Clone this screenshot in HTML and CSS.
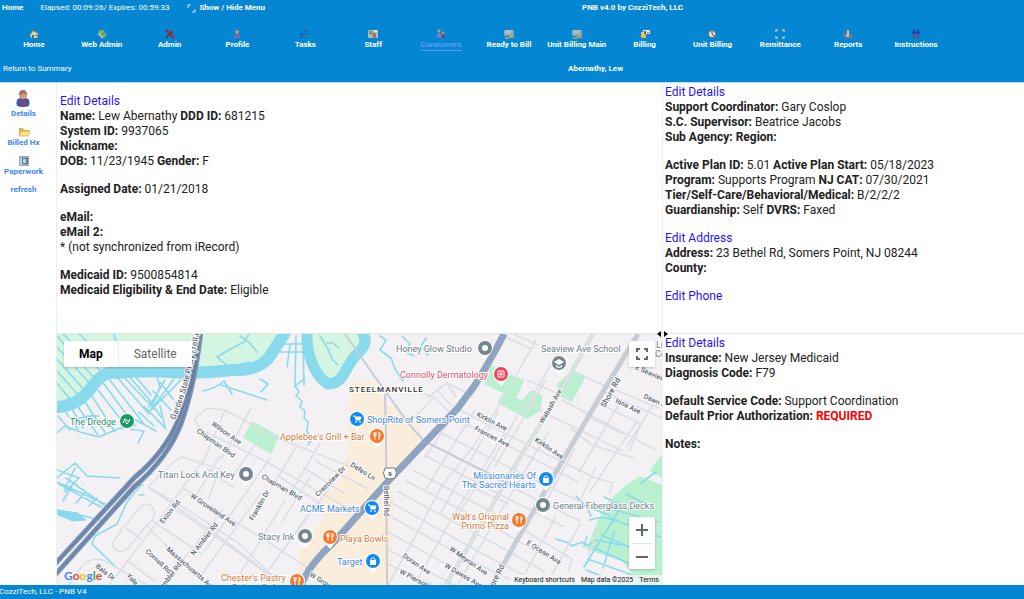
FILE: index.html
```html
<!DOCTYPE html>
<html lang="en">
<head>
<meta charset="utf-8">
<title>PNB v4.0 by CozziTech, LLC</title>
<link rel="stylesheet" href="styles.css">
</head>
<body>
<header class="header">
  <div class="topbar">
    <div class="topbar-left">
      <a class="home-link" href="#">Home</a>
      <span class="session">Elapsed: 00:09:26/ Expires: 00:59:33</span>
      <button class="menu-toggle" type="button"><svg class="toggle-icon" viewBox="0 0 9 9"><path d="M1 4V1h3M8 5v3H5" fill="none" stroke="#cfe8f8"/></svg>Show / Hide Menu</button>
    </div>
    <strong>PNB v4.0 by CozziTech, LLC</strong>
  </div>
  <nav class="nav" aria-label="Main">
    <a href="#"><svg viewBox="0 0 10 10"><path d="M1 5L4 1l5 3-1 5H2z" fill="#d8d2ae"/><path d="M1 5L4 1l5 3" fill="none" stroke="#5b7f5d" stroke-width="1.3"/><path d="M3 6h2v3H3z" fill="#765"/><path d="M6 6h2v1H6z" fill="#47a"/></svg><span>Home</span></a>
    <a href="#"><svg viewBox="0 0 10 10"><circle cx="5" cy="5" r="4.5" fill="#4c86b8"/><path d="M2 2l4-1 1 2-2 2-3 0zM5 6l4-2-1 4-3 1z" fill="#7dbd4b"/><path d="M1 5l3 1 1 3" stroke="#d5e8ef" fill="none"/></svg><span>Web Admin</span></a>
    <a href="#"><svg viewBox="0 0 10 10"><path d="M1 9L8 2" stroke="#444" stroke-width="2"/><path d="M1 1l8 8" stroke="#b71f35" stroke-width="2"/><path d="M7 1l2 2" stroke="#777"/></svg><span>Admin</span></a>
    <a href="#"><svg viewBox="0 0 10 10"><circle cx="5" cy="3" r="2" fill="#c69577"/><path d="M2 9q0-4 3-4t3 4z" fill="#6b74bd"/><path d="M5 5v3" stroke="#d23d48"/></svg><span>Profile</span></a>
    <a href="#"><svg viewBox="0 0 10 10"><path d="M3 2h6M2 5h6M2 8h6" stroke="#295e91"/><path d="M0 5h2M1 8h1" stroke="#2347c5" stroke-width="2"/></svg><span>Tasks</span></a>
    <a href="#"><svg viewBox="0 0 10 10"><path d="M0 1h10v8H0z" fill="#aebbb3"/><path d="M1 2h3v3H1z" fill="#6d8f65"/><path d="M4 5q2-3 4 0v4H5z" fill="#a66d70"/><path d="M6 1h3v2H6z" fill="#dce1cd"/></svg><span>Staff</span></a>
    <a class="current" href="#" aria-current="page"><svg viewBox="0 0 10 10"><circle cx="3" cy="2" r="1.5" fill="#c9987c"/><path d="M1 9q0-5 2-5t3 5z" fill="#7a80b8"/><circle cx="7" cy="4" r="1.5" fill="#dd765d"/><path d="M5 9q1-4 2-4t3 4z" fill="#5c4e98"/></svg><span>Consumers</span></a>
    <a href="#"><svg viewBox="0 0 10 10"><path d="M0 1h10v6H0z" fill="#8ba4b2"/><path d="M1 2h7M1 4h6" stroke="#ccd8dd"/><path d="M1 9h4M7 6v3M5 8h5" stroke="#c3a75b" stroke-width="1.5"/></svg><span>Ready to Bill</span></a>
    <a href="#"><svg viewBox="0 0 10 10"><path d="M0 1h10v6H0z" fill="#8ba4b2"/><path d="M1 2h7M1 4h6" stroke="#ccd8dd"/><path d="M1 9h4M7 6v3M5 8h5" stroke="#c3a75b" stroke-width="1.5"/></svg><span>Unit Billing Main</span></a>
    <a href="#"><svg viewBox="0 0 10 10"><path d="M1 3h5v6H1z" fill="#e9bd58"/><path d="M3 1h7v4H3z" fill="#eee5da"/><path d="M4 2h2v3H4z" fill="#496685"/><path d="M7 3h2v1H7z" fill="#ad5963"/></svg><span>Billing</span></a>
    <a href="#"><svg viewBox="0 0 10 10"><circle cx="5" cy="5" r="3.5" fill="#efe8df" stroke="#7e6868"/><path d="M5 2v3l2 2" stroke="#433e49" fill="none"/></svg><span>Unit Billing</span></a>
    <a href="#"><svg viewBox="0 0 10 10"><path d="M1 3V1h2M7 1h2v2M1 7v2h2M7 9h2V7" stroke="#b9c5c6" stroke-width="1.4" fill="none"/></svg><span>Remittance</span></a>
    <a href="#"><svg viewBox="0 0 10 10"><path d="M1 0v9h9" stroke="#63749d" fill="none"/><path d="M3 5v3" stroke="#ce778d" stroke-width="2"/><path d="M5 1v7" stroke="#efbd8c" stroke-width="2"/><path d="M8 5v3" stroke="#ca5f7a" stroke-width="2"/></svg><span>Reports</span></a>
    <a href="#"><svg viewBox="0 0 10 10"><path d="M1 6h8v4H1z" fill="#346b91"/><path d="M3 0v5M7 0v5M1 3l2 2 2-2 2 2 2-2" stroke="#3430b5" stroke-width="1.3" fill="none"/></svg><span>Instructions</span></a>
  </nav>
  <div class="subbar"><a href="#">Return to Summary</a><strong>Abernathy, Lew</strong></div>
</header>

<main class="main">
  <aside class="sidebar">
    <a href="#"><svg class="person-icon" viewBox="0 0 18 18"><path d="M3 16q-2-8 4-8h4q6 0 4 8-6 2-12 0z" fill="#4655a2"/><path d="M7 9l2 3 2-3v7H8z" fill="#9b3e63"/><circle cx="9" cy="5" r="4" fill="#d79b7e"/><path d="M5 5q0-5 4-5t4 5q-2-3-8 0" fill="#a3705c"/></svg>Details</a>
    <a href="#"><svg viewBox="0 0 12 10"><path d="M1 9V1h4l1 2h5v3z" fill="#dfb34f"/><path d="M1 9l2-5h9l-2 5z" fill="#ffe18c" stroke="#c89b3e" stroke-width=".6"/></svg>Billed Hx</a>
    <a href="#"><svg viewBox="0 0 12 10"><path d="M1 0h10v10H1z" fill="#9aa9b4"/><path d="M2 2h2v7H2z" fill="#c4cccc"/><path d="M4 2h6v6H4z" fill="#527db4"/><path d="M5 3h3v4H5z" fill="#c3dfb9"/></svg>Paperwork</a>
    <a href="#">refresh</a>
  </aside>

  <section class="pane pane-person">
    <div class="group"><p><a href="#">Edit Details</a></p><p><b>Name:</b> Lew Abernathy <b>DDD ID:</b> 681215</p><p><b>System ID:</b> 9937065</p><p><b>Nickname:</b></p><p><b>DOB:</b> 11/23/1945 <b>Gender:</b> F</p></div>
    <div class="group"><p><b>Assigned Date:</b> 01/21/2018</p></div>
    <div class="group"><p><b>eMail:</b></p><p><b>eMail 2:</b></p><p>* (not synchronized from iRecord)</p></div>
    <div class="group"><p><b>Medicaid ID:</b> 9500854814</p><p><b>Medicaid Eligibility &amp; End Date:</b> Eligible</p></div>
  </section>

  <section class="pane pane-plan">
    <div class="group"><p><a href="#">Edit Details</a></p><p><b>Support Coordinator:</b> Gary Coslop</p><p><b>S.C. Supervisor:</b> Beatrice Jacobs</p><p><b>Sub Agency:</b> <b>Region:</b></p></div>
    <div class="group"><p><b>Active Plan ID:</b> 5.01 <b>Active Plan Start:</b> 05/18/2023</p><p><b>Program:</b> Supports Program <b>NJ CAT:</b> 07/30/2021</p><p><b>Tier/Self-Care/Behavioral/Medical:</b> B/2/2/2</p><p><b>Guardianship:</b> Self <b>DVRS:</b> Faxed</p></div>
    <div class="group"><p><a href="#">Edit Address</a></p><p><b>Address:</b> 23 Bethel Rd, Somers Point, NJ 08244</p><p><b>County:</b></p></div>
    <div class="group"><p><a href="#">Edit Phone</a></p></div>
  </section>

  <section class="map" aria-label="Map">
    <svg class="map-canvas" viewBox="57 334 605 251" preserveAspectRatio="xMidYMid slice">
      <defs>
        <g id="pin"><path d="M0 12L-5 6a8 8 0 1 1 10 0z" fill="#fff"/><circle r="7"/></g>
        <g id="food" fill="none" stroke="#fff"><path d="M-3-4v3q0 1 1 1t1-1v-3M-2-4v8M2 4v-8q2 1 1 4H2"/></g>
        <g id="cart" fill="none" stroke="#fff"><path d="M-4-3h2l1 4h4l1-3h-5" fill="#fff"/><circle cx="-1" cy="3" r=".5"/><circle cx="3" cy="3" r=".5"/></g>
        <g id="bag"><path d="M-3-1h6v5h-6z" fill="#fff"/><path d="M-2-1v-1q2-3 4 0v1" fill="none" stroke="#fff"/></g>
        <path id="parkway-label" d="M175 420Q185 396 190 375Q196 352 202 320"/>
      </defs>
      <rect x="57" y="334" width="605" height="251" fill="#f4f1f5"/>

      <g fill="#d4f5e2">
        <path d="M57 334h225L264 365 240 370 115 368 90 386 75 403 57 409z"/>
        <path d="M302 334h57l6 12-16 20-17 18-17-5-8-20z"/>
      </g>
      <g fill="#b9f0cf">
        <path d="M252 421l27 15-8 18-28-16z"/><path d="M490 365l34 15-8 19-32-15z"/><path d="M502 394l20 6 10-10 11 6-3 15-13 8-29-16z"/><path d="M573 370l13 6-14 26-14-6-1-12z"/><path d="M640 476l22 9v100h-20l-20-24-36-12 18-42 18-19z"/><path d="M662 454l-13 17 13 7z"/>
      </g>
      <path d="M350 382h24l10 20 38 24-10 34-18 14-3 111h-65l-28-15 1-18 23-31-1-20 18-18 9-34z" fill="#faeddb"/>

      <g fill="none" stroke="#89daec" stroke-linejoin="round" stroke-linecap="round">
        <path d="M57 407Q78 406 91 388T116 373Q142 370 170 372T232 370Q260 371 270 356T286 331" stroke-width="12"/>
        <path d="M307 331q-1 17 5 32t16 21q11 0 17-12t15-21 2-19" stroke-width="11"/>
        <path d="M57 336l40 45M57 347l35 39M57 359l29 33M57 371l23 26M57 383l16 20M63 334l42 41M79 334l36 34M114 334l8 30" stroke-width="1.6"/>
        <path d="M78 407l20 28M85 402l21 32M92 396l23 36M98 390l27 35M104 384l31 42M109 379l35 45M116 376l33 38M121 374l33 35M128 375l25 29M135 376l16 19M58 416l12 14M65 411l13 18M71 407l12 21M156 374l4 13-8 20M165 380l-16 27M174 379l-23 31M181 380l-33 33M160 382l13 17M153 391l18 19M149 400l12 17M144 406l22 23M139 412l15 14M132 418l24 13M160 406l5 21" stroke-width="1.6"/>
        <path d="M57 433l8-7 15 6 19 5 21-9 24 3-6 12M74 420q12-5 25-4M249 334l-5 8-17 9-10 6 12 10 20-5M240 336l10 7 7 9M203 391q14-3 21-10l8 13M221 385l46 15" stroke-width="1.6"/>
        <path d="M281 344h26M278 352h27M290 345l-3 22M296 336l-1 51M303 342l1 43M260 379l8 5-7 8M295 386l10-8M296 387l3 5-3 4 6 5-2 6 5 4-1 7 4 4-1 10 5 7-4 6M320 336l8 13 4 10 6 6M327 343h6l6 5M380 336l6 4-6 10 11 8 4 11 8 12M402 336l8 8-6 7 10 5M426 338l-5 8 7 9" stroke-width="1.6"/>
        <path d="M57 478l18-15 12 13 33 2M57 470l22 8-14 14M66 478l38 27M57 482l48 22M59 484l42 23M75 468l-11 22M72 486l-9 15M85 493l-9 10M97 498l-8 8M57 510l23 5 20 5M141 485l-14 17-10 22-22 12-3 8 24 23M140 485h3M139 495h5" stroke-width="1.6"/>
        <path d="M57 510l21 3 8 7-13 1-15-6z" fill="#89daec"/>
        <path d="M576 496l11 12 4 8M590 520q12-5 26 1M588 507l23 9M604 497l25 12M556 539l13 4 3 3 10-4 6 4 8-6 15 3 10 2M587 536l-3 11M584 567l34-55M594 548l45 20M588 559l61 22M586 570l36 14M601 535l47 20M609 518l51 19M615 510l43 12M626 494l28 14M641 483l15-11M614 532l-11 36" stroke-width="1.6"/>
      </g>

      <g fill="none" stroke="#dcdfe5" stroke-width="1.6" stroke-linejoin="round">
        <path d="M195 419l12-11 18 2 54 29 75 29M195 419q2 10 13 14l57 28 91 52M225 410l-20 48-29 39-39 52-28 36M251 408l-16 30M236 434l-15 25M176 460l-28 27 35 20 54 35 35 33M172 463l10-6 38 12-12 30M220 456l-23 38M183 488l88 56 34 22 20 19M148 487l68 47 54 41M171 506l57 39 46 34M146 525l56 57M151 520l51 34M207 469l27 19M189 495l39 23M223 510l-53 66M261 493l-61 84M285 500l-50 82M308 515l-47 66M271 457l-67 95M310 477l-28 45M348 462l-66 90M260 438l-25 35M315 461l53 28M303 467l42 27M277 475l45 30M320 443l-31 53M296 447l-25 42"/>
        <path d="M112 544l10-15 17-21q9-8 14 0t-7 18l-18 22q-8 7-14 0z M126 528l15 11M69 585l14-20q8-8 20-5l44 25M126 560l30 22"/>
        <path d="M427 398l20-15 26 13M413 389l20 8M438 391l14 15M446 382l10 15M413 419l21-22M434 397l15 15M501 335l31 14M513 334l25 11M527 380l45 20M575 373l84 35M604 392l58 26M596 402l45 22-12 27M587 416l36 18M562 400l94 50M524 402l39 20 60 29M458 409l48 25 89 44 18 5-4 10M464 423l45 23 69 36M441 433l73 37 65 31M434 446l80 42 66 33M424 455l79 41 61 31M413 470l94 50 65 39-4 12M406 481l95 50 48 28M397 491l100 54 48 27M390 502l93 52 59 31M388 515l78 43 49 24M386 531l89 49M387 549l67 36M388 564l45 21"/>
        <path d="M536 340l-38 67-25 40-32 40-26 50-27 48M558 352l-31 54M546 380l-51 86M522 407l-28 51-38 60M499 410l-59 104M475 410l-49 79M456 411l-32 48M504 434l-52 84-36 64M549 431l-53 88-38 65M575 448l-32 59M596 466l-20 43M619 404l-40 68M637 421l-48 72M654 403l-28 45M570 428l22 17 42 13M556 516l-31 58M580 524l-32 58M598 530l-10 26M470 486l39 18"/>
      </g>
      <g fill="none" stroke="#c7ccd5" stroke-width="3">
        <path d="M345 334l30 43 34 47 15 17M385 394l1 45 1 146" stroke-width="2"/>
        <path d="M638 334l-37 61-45 77-40 70-24 43" stroke-width="5"/>
        <path d="M593 334l-37 65-39 63-39 68-32 55" stroke="#cfd9d9" stroke-width="4"/><path d="M593 334l-37 65-39 63-39 68-32 55" stroke="#edf9ef" stroke-width="1"/>
        <path d="M424 441l90 45" stroke-width="2"/>
      </g>
      <path d="M504 334q-11 22-29 51l-18 24-67 70-57 64q-24 22-32 42" fill="none" stroke="#8fa4c1" stroke-width="7"/>
      <g fill="none" stroke-linejoin="round">
        <path d="M200 330q-6 55-22 91-14 32-43 56l-80 87M201 330q-6 55-20 94-13 34-47 63l-79 88" stroke="#7890b2" stroke-width="5"/>
        <path d="M200 330q-6 55-22 91-14 32-43 56l-80 87M201 330q-6 55-20 94-13 34-47 63l-79 88" stroke="#5d789d" stroke-width="1"/>
      </g>

      <g class="street">
        <text><textPath href="#parkway-label">Garden State Pkwy (Toll road)</textPath></text>
        <g class="small">
          <text transform="translate(211 425) rotate(35)">Wilson Ave</text><text transform="translate(196 432) rotate(35)">Chapman Blvd</text><text transform="translate(261 478) rotate(30)">Chapman Blvd</text>
          <text transform="translate(163 524) rotate(-51)">Exton Rd</text><text transform="translate(190 497) rotate(34)">W Groveland Ave</text><text transform="translate(194 556) rotate(-52)">N Ambler Rd</text><text transform="translate(253 521) rotate(-60)">Franklin Dr</text>
          <text transform="translate(145 552) rotate(43)">Cornell Rd</text><text transform="translate(166 550) rotate(41)">Massachusetts Ave</text><text transform="translate(95 567) rotate(38)">Bala Dr</text><text transform="translate(126 576) rotate(47)">Yale</text><text transform="translate(158 596) rotate(-53)">N Ambler Rd</text>
          <text transform="translate(318 497) rotate(-45)">Crestview Dr</text><text transform="translate(350 466) rotate(32)">Defeo Ln</text><text transform="translate(384 486) rotate(90)">Bethel Rd</text><text transform="translate(309 576) rotate(31)">W Groveland Ave</text>
          <text transform="translate(476 416) rotate(27)">Kirklin Ave</text><text transform="translate(474 430) rotate(27)">Frances Ave</text><text transform="translate(534 441) rotate(34)">Kirklin Ave</text><text transform="translate(543 424) rotate(-60)">Wabash Ave</text><text transform="translate(615 402) rotate(27)">Iona Ave</text><text transform="translate(643 398) rotate(24)">Dawn Ave</text><text transform="translate(635 369) rotate(24)">E Seaview Ave</text>
          <text transform="translate(526 544) rotate(32)">E Ocean Ave</text><text transform="translate(449 550) rotate(35)">W Meyran Ave</text><text transform="translate(444 567) rotate(30)">W Dawes Ave</text><text transform="translate(402 557) rotate(34)">Doran Ave</text><text transform="translate(399 573) rotate(28)">W Pierson Ave</text>
        </g>
        <text transform="translate(605 408) rotate(-61)">Shore Rd</text><text transform="translate(490 595) rotate(-63)">Shore Rd</text>
      </g>

      <g class="places">
        <text x="70" y="425" fill="#27906a">The Dredge</text><text x="396" y="352">Honey Glow Studio</text><text x="400" y="378" fill="#e34e65">Connolly Dermatology</text>
        <text x="367" y="423" fill="#4085e4">ShopRite of Somers Point</text><text x="280" y="440" fill="#d97835">Applebee's Grill + Bar</text><text x="158" y="478">Titan Lock And Key</text>
        <text x="300" y="512" fill="#4085e4">ACME Markets</text><text x="258" y="540">Stacy Ink</text><text x="340" y="542" fill="#d97835">Playa Bowls</text><text x="337" y="565" fill="#4085e4">Target</text><text x="221" y="581" fill="#d97835">Chester's Pastry</text><text x="232" y="591" fill="#d97835">Bakery Cafe</text>
        <text x="541" y="352">Seaview Ave School</text><text x="536" y="479" text-anchor="end" fill="#4085e4">Missionaries Of</text><text x="536" y="488" text-anchor="end" fill="#4085e4">The Sacred Hearts</text><text x="509" y="520" text-anchor="end" fill="#d97835">Walt's Original</text><text x="509" y="529" text-anchor="end" fill="#d97835">Primo Pizza</text><text x="553" y="509">General Fiberglass Decks</text><text x="656" y="348">Li</text><text x="655" y="357">Co</text>
      </g>
      <text class="town" x="349" y="392">STEELMANVILLE</text>

      <g transform="translate(127 421)" fill="#169d65"><use href="#pin"/><path d="M-4 2l2-4 3 2 2-2M-3-2l3 5 3-4" fill="none" stroke="#fff"/></g>
      <g fill="#758792"><g transform="translate(485 348)"><use href="#pin"/><circle r="3" fill="#fff"/></g><g transform="translate(246 474)"><use href="#pin"/><circle r="3" fill="#fff"/></g><g transform="translate(305 536)"><use href="#pin"/><circle r="3" fill="#fff"/></g><g transform="translate(543 505)"><use href="#pin"/><circle r="3" fill="#fff"/></g><g transform="translate(559 363)"><use href="#pin"/><path d="M-5-1l5-3 5 3-5 3zM-3 2l3 2 3-2v2l-3 1-3-1z" fill="#fff"/></g></g>
      <g transform="translate(501 374)" fill="#f5425c"><use href="#pin"/><path d="M-3-3h6v6h-6z" fill="none" stroke="#fff"/><path d="M0-2v4M-2 0h4" stroke="#fff"/></g>
      <g fill="#1389f7"><g transform="translate(357 419)"><use href="#pin"/><use href="#cart"/></g><g transform="translate(372 508)"><use href="#pin"/><use href="#cart"/></g><g transform="translate(373 561)"><use href="#pin"/><use href="#bag"/></g><g transform="translate(546 479)"><use href="#pin"/><use href="#bag"/></g></g>
      <g fill="#f9782c"><g transform="translate(377 436)"><use href="#pin"/><use href="#food"/></g><g transform="translate(330 537)"><use href="#pin"/><use href="#food"/></g><g transform="translate(297 581)"><use href="#pin"/><use href="#food"/></g><g transform="translate(519 520)"><use href="#pin"/><use href="#food"/></g></g>
      <path d="M385 468h10q3 5 0 10l-5 1-5-1q-3-5 0-10z" fill="#fff" stroke="#777"/><text class="shield" x="390" y="476">9</text>
    </svg>
    <div class="map-type"><button class="selected" type="button">Map</button><button type="button">Satellite</button></div>
    <button class="map-full" type="button" aria-label="Toggle fullscreen view"><svg viewBox="0 0 14 14"><path d="M2 5V2h3M9 2h3v3M12 9v3H9M5 12H2V9" fill="none" stroke="#666" stroke-width="2"/></svg></button>
    <div class="map-zoom"><button type="button" aria-label="Zoom in"><svg viewBox="0 0 12 12"><path d="M6 0v12M0 6h12" stroke="#666" stroke-width="2"/></svg></button><button type="button" aria-label="Zoom out"><svg viewBox="0 0 12 12"><path d="M0 6h12" stroke="#666" stroke-width="2"/></svg></button></div>
    <a class="google" href="#"><span class="blue">G</span><span class="red">o</span><span class="yellow">o</span><span class="blue">g</span><span class="green">l</span><span class="red">e</span></a>
    <div class="map-legal"><button type="button">Keyboard shortcuts</button><span>Map data ©2025</span><a href="#">Terms</a></div>
  </section>

  <section class="pane pane-insurance">
    <svg class="splitter" viewBox="0 0 11 6"><path d="M4 0v6L0 3zM7 0v6l4-3z"/></svg>
    <div class="group"><p><a href="#">Edit Details</a></p><p><b>Insurance:</b> New Jersey Medicaid</p><p><b>Diagnosis Code:</b> F79</p></div>
    <div class="group"><p><b>Default Service Code:</b> Support Coordination</p><p><b>Default Prior Authorization:</b> <b class="required">REQUIRED</b></p></div>
    <div class="group"><p><b>Notes:</b></p></div>
  </section>
</main>
<footer class="footer">CozziTech, LLC - PNB V4</footer>
</body>
</html>
```
FILE: styles.css
```css
* { box-sizing: border-box; }
html, body { height: 100%; }
body {
  margin: 0;
  display: grid;
  grid-template-rows: auto minmax(0, 1fr) auto;
  overflow: hidden;
  font-family: Roboto, "Liberation Sans", sans-serif;
  font-size: 12px;
  line-height: 15px;
  color: #222;
  background: #fff;
}
p { margin: 0; }
a { text-decoration: none; color: #1f14ff; }
button { border: 0; padding: 0; background: none; font: inherit; color: inherit; cursor: pointer; }
svg { display: block; }

.header { background: #0586d3; color: #fff; font-size: 8px; line-height: 14px; padding: 1px 0 6px; border-bottom: 1px solid #b9def4; }
.header a { color: #fff; }
.topbar { display: grid; grid-template-columns: 582fr 442fr; }
.topbar-left { display: flex; padding-left: 2px; }
.home-link { font-weight: 700; margin-right: 17px; }
.session { margin-right: 18px; }
.menu-toggle { display: flex; align-items: center; gap: 3px; font-weight: 700; }
.toggle-icon { width: 9px; height: 9px; }
.nav { display: grid; grid-template-columns: repeat(14, 1fr); margin-top: 14px; padding-right: 74px; }
.nav a { display: flex; flex-direction: column; align-items: center; gap: 1px; font-weight: 700; line-height: 10px; white-space: nowrap; }
.nav svg { width: 10px; height: 10px; }
.nav span { border-bottom: 1px solid transparent; }
.nav .current { color: #5b9df5; }
.nav .current span { border-color: #5b9df5; }
.subbar { display: grid; grid-template-columns: 565fr 456fr; margin-top: 11px; padding-left: 3px; }

.main { display: grid; grid-template-columns: 57px minmax(0, 605fr) minmax(0, 362fr); grid-template-rows: minmax(0, 1fr) minmax(0, 1fr); }
.sidebar { grid-row: 1 / 3; display: flex; flex-direction: column; align-items: center; gap: 8px; padding: 7px 9px 0 0; border-right: 1px solid #eee; }
.sidebar a { display: flex; flex-direction: column; align-items: center; gap: 1px; font-size: 8px; font-weight: 700; line-height: 10px; color: #4285f4; }
.sidebar svg { width: 12px; height: 10px; }
.sidebar .person-icon { width: 18px; height: 18px; }
.pane { border-bottom: 1px solid #e6e6e6; }
.pane-person { padding: 11px 3px; }
.pane-plan, .pane-insurance { border-left: 1px solid #eee; padding: 2px; }
.pane-insurance { position: relative; border-bottom: 0; }
.group + .group { margin-top: 13px; }
.required { color: #f00; }
.splitter { position: absolute; left: -6px; top: -3px; width: 11px; height: 6px; }

.map { position: relative; overflow: hidden; background: #f4f1f5; }
.map-canvas { width: 100%; height: 100%; }
.map-canvas text { paint-order: stroke; stroke: #fff; stroke-width: 2px; stroke-linejoin: round; }
.street { font-size: 8px; font-weight: 500; fill: #596270; }
.small { font-size: 7px; }
.places { font-size: 9px; fill: #6b7c86; }
.town { font-size: 8px; font-weight: 500; letter-spacing: 1px; fill: #333; }
.shield { font-size: 6px; font-weight: 700; text-anchor: middle; fill: #444; }
.map-type, .map-full, .map-zoom { position: absolute; background: #fff; box-shadow: 0 1px 2px rgba(0, 0, 0, .2); }
.map-type { left: 7px; top: 7px; display: flex; height: 26px; color: #666; }
.map-type button { padding: 0 15px; }
.map-type .selected { color: #000; font-weight: 700; border-right: 1px solid #eee; }
.map-full, .map-zoom { right: 7px; width: 26px; }
.map-full { top: 7px; height: 26px; }
.map-full svg { width: 14px; height: 14px; margin: auto; }
.map-zoom { bottom: 16px; }
.map-zoom button { display: block; width: 22px; height: 26px; margin: 0 auto; }
.map-zoom button + button { border-top: 1px solid #e6e6e6; }
.map-zoom svg { width: 12px; height: 12px; margin: auto; }
.google { position: absolute; left: 7px; bottom: 2px; font-family: Lato, sans-serif; font-size: 12px; font-weight: 700; text-shadow: 0 0 2px #fff; }
.blue { color: #4285f4; }
.red { color: #ea4335; }
.yellow { color: #fbbc04; }
.green { color: #34a853; }
.map-legal { position: absolute; right: 0; bottom: 0; display: flex; gap: 6px; padding: 0 3px; background: rgba(245, 245, 245, .8); font-size: 7px; line-height: 10px; color: #111; }
.map-legal a { color: #111; }
.footer { background: #0586d3; color: #fff; font-size: 8px; line-height: 14px; margin-left: -1px; }
```
